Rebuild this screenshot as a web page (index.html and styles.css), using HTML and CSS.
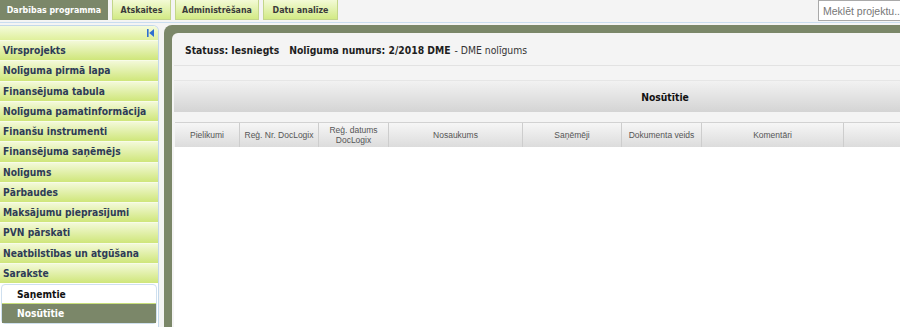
FILE: index.html
```html
<!DOCTYPE html>
<html lang="lv">
<head>
    <meta charset="UTF-8">
    <meta name="viewport" content="width=device-width, initial-scale=1.0">
    <title>Sarakste - Nosūtītie</title>
    <link rel="stylesheet" href="styles.css">
</head>
<body>
    <div class="topbar">
        <div class="tabs">
            <a class="tab active" href="#">Darbības programma</a>
            <a class="tab" href="#">Atskaites</a>
            <a class="tab" href="#">Administrēšana</a>
            <a class="tab" href="#">Datu analīze</a>
        </div>
        <input type="text" class="search" placeholder="Meklēt projektu...">
    </div>

    <div class="layout">
        <div class="sidebar">
            <div class="sidebar-head">
                <svg width="7" height="8" viewBox="0 0 7 8">
                    <rect x="0" y="0" width="1.6" height="8" fill="#2f6fd0"/>
                    <polygon points="7,0 7,8 2.2,4" fill="#2f6fd0"/>
                </svg>
            </div>
            <a class="menu-item" href="#">Virsprojekts</a>
            <a class="menu-item" href="#">Nolīguma pirmā lapa</a>
            <a class="menu-item" href="#">Finansējuma tabula</a>
            <a class="menu-item" href="#">Nolīguma pamatinformācija</a>
            <a class="menu-item" href="#">Finanšu instrumenti</a>
            <a class="menu-item" href="#">Finansējuma saņēmējs</a>
            <a class="menu-item" href="#">Nolīgums</a>
            <a class="menu-item" href="#">Pārbaudes</a>
            <a class="menu-item" href="#">Maksājumu pieprasījumi</a>
            <a class="menu-item" href="#">PVN pārskati</a>
            <a class="menu-item" href="#">Neatbilstības un atgūšana</a>
            <a class="menu-item" href="#">Sarakste</a>
            <div class="submenu">
                <a class="sub-item" href="#">Saņemtie</a>
                <a class="sub-item selected" href="#">Nosūtītie</a>
            </div>
        </div>

        <div class="main">
            <div class="inner">
                <div class="status">
                    <b>Statuss: Iesniegts</b>
                    <b class="number">Nolīguma numurs: 2/2018 DME</b> - DME nolīgums
                </div>
                <div class="grid-panel">
                    <div class="panel-title">Nosūtītie</div>
                    <div class="grid-head">
                        <div class="col c1">Pielikumi</div>
                        <div class="col c2">Reģ. Nr. DocLogix</div>
                        <div class="col c3">Reģ. datums DocLogix</div>
                        <div class="col c4">Nosaukums</div>
                        <div class="col c5">Saņēmēji</div>
                        <div class="col c6">Dokumenta veids</div>
                        <div class="col c7">Komentāri</div>
                        <div class="col c8"></div>
                    </div>
                    <div class="grid-body"></div>
                </div>
            </div>
        </div>
    </div>
</body>
</html>
```

FILE: styles.css
```css
body {
    margin: 0;
    background-color: #f4f4f4;
    font-family: 'DejaVu Sans Condensed', 'DejaVu Sans', Verdana, sans-serif;
    overflow: hidden;
    height: 327px;
}
a {
    text-decoration: none;
}
.topbar {
    display: flex;
    justify-content: space-between;
    height: 22px;
    border-bottom: 1px solid #c9ddef;
}
.tabs {
    display: flex;
    gap: 4px;
    height: 20px;
}
.tab {
    display: flex;
    align-items: center;
    justify-content: center;
    font-size: 8.8px;
    font-weight: bold;
    color: #3a3a3a;
    white-space: nowrap;
    background: linear-gradient(#f3fad6, #d2ea85);
    border: 1px solid #c3d68a;
    border-top: none;
    box-sizing: border-box;
}
.tab.active {
    width: 108px;
    color: #fff;
    background: #7b8769;
    border-color: #7b8769;
}
.tab:nth-child(2) { width: 59px; }
.tab:nth-child(3) { width: 84px; }
.tab:nth-child(4) { width: 75px; }
.search {
    width: 90px;
    height: 21px;
    margin-right: -8px;
    padding: 0 4px;
    border: 1px solid #a9a9a9;
    box-sizing: border-box;
    font-family: 'Liberation Sans', Arial, sans-serif;
    font-size: 10.5px;
    background: #fff;
}
.search::placeholder {
    color: #777;
}
.layout {
    display: flex;
    gap: 5px;
    margin-top: 2px;
}
.sidebar {
    width: 159px;
    flex-shrink: 0;
    height: 305px;
    background: #fff;
    border: 1px solid #c3d8ea;
    border-left: none;
    border-radius: 0 6px 0 0;
    box-sizing: border-box;
    overflow: hidden;
}
.sidebar-head {
    height: 14px;
    display: flex;
    justify-content: flex-end;
    align-items: center;
    padding-right: 4px;
    background: linear-gradient(#f4fbdc, #dff09c);
}
.menu-item {
    display: flex;
    align-items: center;
    height: 20.25px;
    padding-left: 3px;
    box-sizing: border-box;
    font-size: 10.2px;
    font-weight: bold;
    color: #2e3c57;
    background: linear-gradient(#f3f9d8, #cfe67a);
    border-top: 1px solid #f8fce8;
    white-space: nowrap;
}
.submenu {
    margin: 1px 1px 0 1px;
    padding-top: 1px;
    border: 1px solid #cfe0ef;
    border-radius: 4px;
    background: #fff;
}
.sub-item {
    display: flex;
    align-items: center;
    height: 17px;
    padding-left: 15px;
    font-size: 10.2px;
    font-weight: bold;
    color: #111;
}
.sub-item.selected {
    height: 19px;
    color: #fff;
    background: #7b8769;
    border-top: 1px solid #c8df7a;
}
.main {
    flex: 1;
    height: 310px;
    background: #7b8769;
    border-radius: 8px 0 0 0;
    padding: 8px 0 0 8px;
    min-width: 0;
}
.inner {
    height: 100%;
    background: #f4f4f4;
    border-radius: 6px 0 0 0;
    padding-left: 2px;
    overflow: hidden;
}
.status {
    height: 30px;
    padding-top: 2px;
    display: flex;
    align-items: center;
    padding-left: 11px;
    font-size: 10.3px;
    color: #333;
    border-bottom: 1px solid #e2e2e2;
    white-space: nowrap;
}
.status b {
    color: #1e1e1e;
    margin-right: 4px;
}
.status .number {
    margin-left: 6px;
}
.grid-panel {
    width: 982px;
    margin-top: 14px;
}
.panel-title {
    height: 31px;
    display: flex;
    align-items: center;
    justify-content: center;
    font-size: 10.3px;
    font-weight: bold;
    color: #111;
    background: linear-gradient(#f2f2f2, #d4d4d4);
    border-top: 1px solid #e6e6e6;
}
.grid-head {
    display: flex;
    height: 24px;
    margin-top: 10px;
    border-top: 1px solid #d2d2d2;
    margin-left: 1px;
}
.col {
    display: flex;
    align-items: center;
    justify-content: center;
    text-align: center;
    font-family: 'Liberation Sans', Arial, sans-serif;
    font-size: 8.5px;
    line-height: 10px;
    color: #555;
    white-space: nowrap;
    background: linear-gradient(#f6f6f6, #dcdcdc);
    border-right: 1px solid #cdcdcd;
    box-sizing: border-box;
    flex-shrink: 0;
}
.c1 { width: 65px; }
.c2 { width: 79px; }
.c3 { width: 70px; padding: 0 4px; white-space: normal; }
.c4 { width: 134px; }
.c5 { width: 99px; }
.c6 { width: 80px; }
.c7 { width: 142px; }
.c8 { flex: 1; }
.grid-body {
    height: 200px;
    background: #fff;
}
```
